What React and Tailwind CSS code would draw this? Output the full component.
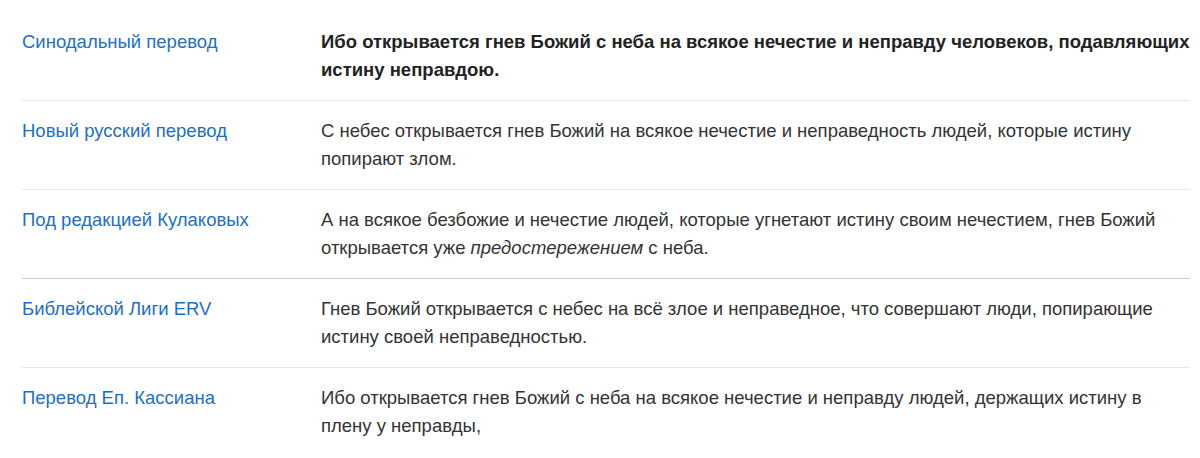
import React from 'react';

const rows = [
    {
        name: 'Синодальный перевод',
        text: <strong className="font-bold text-[#222]">Ибо открывается гнев Божий с неба на всякое нечестие и неправду человеков, подавляющих истину неправдою.</strong>,
    },
    {
        name: 'Новый русский перевод',
        text: 'С небес открывается гнев Божий на всякое нечестие и неправедность людей, которые истину попирают злом.',
    },
    {
        name: 'Под редакцией Кулаковых',
        text: <>А на всякое безбожие и нечестие людей, которые угнетают истину своим нечестием, гнев Божий открывается уже <em>предостережением</em> с неба.</>,
        dark: true,
    },
    {
        name: 'Библейской Лиги ERV',
        text: 'Гнев Божий открывается с небес на всё злое и неправедное, что совершают люди, попирающие истину своей неправедностью.',
    },
    {
        name: 'Перевод Еп. Кассиана',
        text: 'Ибо открывается гнев Божий с неба на всякое нечестие и неправду людей, держащих истину в плену у неправды,',
        last: true,
    },
];

const App = () => {
    return (
        <div className="min-h-screen bg-white font-['Liberation_Sans',Arial,sans-serif] text-[18.5px] leading-[28px] text-[#333]">
            <div className="ml-[22px] w-[1168px] pt-3">
                {rows.map((row, i) => (
                    <div
                        key={i}
                        className={`flex py-4 ${row.last ? '' : 'border-b'} ${row.dark ? 'border-[#cccccc]' : 'border-[#e6e6e6]'}`}
                    >
                        <div className="w-[299px] shrink-0 text-[#1e70be]">{row.name}</div>
                        <div className="flex-1">{row.text}</div>
                    </div>
                ))}
            </div>
        </div>
    );
};

export default App;
